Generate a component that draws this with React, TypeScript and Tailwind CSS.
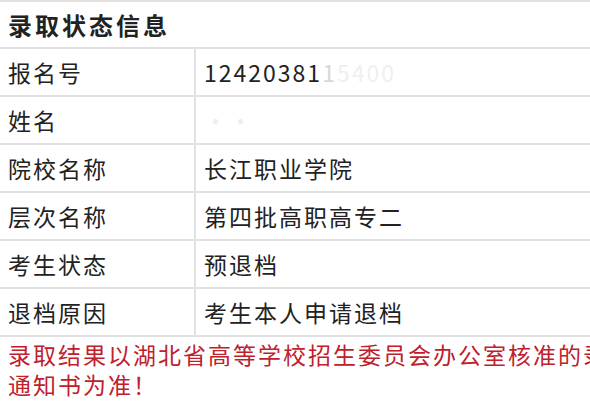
const rows: { label: string; value: React.ReactNode }[] = [
  {
    label: "报名号",
    value: (
      <span>
        12420381<span className="text-[#d8d8d8]">1</span>
        <span className="text-[#efefef]">5400</span>
      </span>
    ),
  },
  { label: "姓名", value: <span className="text-[#eeeeee]">··</span> },
  { label: "院校名称", value: "长江职业学院" },
  { label: "层次名称", value: "第四批高职高专二" },
  { label: "考生状态", value: "预退档" },
  { label: "退档原因", value: "考生本人申请退档" },
];

export default function App() {
  return (
    <div
      className="w-[590px] h-[404px] overflow-hidden bg-white text-[#222]"
      style={{ fontFamily: '"Noto Sans CJK SC", "Noto Sans", sans-serif' }}
    >
      <div className="w-[640px] border-t-2 border-[#e2e2e2]">
        <div className="h-[47px] flex items-center pl-2 border-b-2 border-[#e2e2e2]">
          <span className="text-[24px] font-bold tracking-[3px]">录取状态信息</span>
        </div>
        {rows.map((r) => (
          <div key={r.label} className="h-[48px] flex border-b-2 border-[#e2e2e2]">
            <div className="w-[196px] flex items-center pl-2 border-r-2 border-[#e2e2e2] text-[23px] tracking-[2px]">
              {r.label}
            </div>
            <div className="flex-1 flex items-center pl-[8px] text-[23px] tracking-[2px]">
              {r.value}
            </div>
          </div>
        ))}
        <div className="pl-2 pt-[2px] text-[23px] leading-[30px] tracking-[2px] text-[#c0202c]">
          录取结果以湖北省高等学校招生委员会办公室核准的录取通知书为准！
        </div>
      </div>
    </div>
  );
}
